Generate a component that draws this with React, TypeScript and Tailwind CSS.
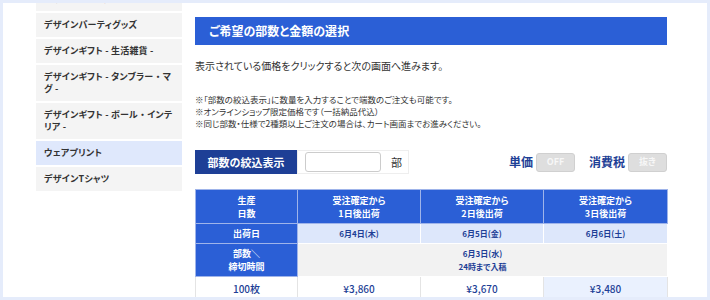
import React from 'react';

const jp = "font-['Noto_Sans_CJK_JP','Noto_Sans',sans-serif] [font-feature-settings:'palt']";

const menu = [
    { label: ['デザインフラッグ'] },
    { label: ['デザインパーティグッズ'] },
    { label: ['デザインギフト - 生活雑貨 -'] },
    { label: ['デザインギフト - タンブラー・マ', 'グ -'] },
    { label: ['デザインギフト - ボール・インテ', 'リア -'] },
    { label: ['ウェアプリント'], active: true },
    { label: ['デザインTシャツ'] },
];

// full-width middle dot keeps its spacing in the reference
function MenuLine({ text }: { text: string }) {
    const parts = text.split('・');
    return (
        <div className="whitespace-pre">
            {parts.map((p, i) => (
                <React.Fragment key={i}>
                    {i > 0 && <span className="[font-feature-settings:normal]">・</span>}
                    {p}
                </React.Fragment>
            ))}
        </div>
    );
}

function Sidebar() {
    return (
        <aside className="ml-[33px] w-[146px] shrink-0 -mt-[16px]">
            {menu.map((m) => (
                <div
                    key={m.label.join('')}
                    className={`border-b-2 border-white px-[8px] py-[6px] text-[9px] font-bold leading-[12px] tracking-[0.2px] text-[#333] ${
                        m.active ? 'bg-[#dfe8fc]' : 'bg-[#f4f4f4]'
                    }`}
                >
                    {m.label.map((l) => (
                        <MenuLine key={l} text={l} />
                    ))}
                </div>
            ))}
        </aside>
    );
}

function Toggle({ label, value }: { label: string; value: string }) {
    return (
        <div className="flex items-center gap-[3px]">
            <span className="text-[12px] font-bold text-[#1e3f96]">{label}</span>
            <span className="flex h-[19px] w-[39px] items-center justify-center rounded-[3px] border border-[#d0d0d0] bg-[#dedede] text-[9px] font-bold text-[#f7f7f7]">
                {value}
            </span>
        </div>
    );
}

const th = 'border border-[#9fb4ea] bg-[#2b5fd6] font-bold text-white';
const day = 'border border-white bg-[#dde7fb] text-[8px] font-bold text-[#1e3f96]';

function PriceTable() {
    return (
        <table className="mt-[15px] w-[472px] table-fixed border-collapse text-center text-[9px] leading-[13px]">
            <colgroup>
                <col className="w-[102px]" />
                <col className="w-[123px]" />
                <col className="w-[123px]" />
                <col className="w-[124px]" />
            </colgroup>
            <tbody>
                <tr className="h-[34px]">
                    <td className={th}>生産<br />日数</td>
                    <td className={th}>受注確定から<br />1日後出荷</td>
                    <td className={th}>受注確定から<br />2日後出荷</td>
                    <td className={th}>受注確定から<br />3日後出荷</td>
                </tr>
                <tr className="h-[20px]">
                    <td className={th}>出荷日</td>
                    <td className={day}>6月4日(木)</td>
                    <td className={day}>6月5日(金)</td>
                    <td className={day}>6月6日(土)</td>
                </tr>
                <tr className="h-[33px]">
                    <td className={th}>部数＼<br />締切時間</td>
                    <td colSpan={3} className="border border-white bg-[#f2f2f2] text-[8px] font-bold text-[#1e3f96]">
                        6月3日(水)<br />24時まで入稿
                    </td>
                </tr>
                <tr className="h-[24px] text-[10px] font-medium text-[#1e3f96]">
                    <td className="border border-[#e4e4e4] bg-white">100枚</td>
                    <td className="border border-[#e4e4e4] bg-white">¥3,860</td>
                    <td className="border border-[#e4e4e4] bg-white">¥3,670</td>
                    <td className="border border-[#e4e4e4] bg-[#eaf1fe]">¥3,480</td>
                </tr>
            </tbody>
        </table>
    );
}

export default function App() {
    return (
        <div className={`h-[300px] w-[710px] overflow-hidden bg-[#e5ecfb] p-[3px] ${jp}`}>
            <div className="flex h-full overflow-hidden bg-white">
                <Sidebar />

                <main className="ml-[13px] w-[472px] shrink-0 pt-[14px]">
                    {/* Section title */}
                    <h2 className="flex h-[28px] items-center bg-[#2b5fd6] pl-[14px] text-[12px] font-bold text-white">
                        ご希望の部数と金額の選択
                    </h2>

                    <p className="mt-[14px] text-[10px] leading-[14px] text-[#333]">
                        表示されている価格をクリックすると次の画面へ進みます。
                    </p>

                    <ul className="mt-[20px] text-[8.5px] leading-[12px] text-[#333]">
                        <li>※「部数の絞込表示」に数量を入力することで端数のご注文も可能です。</li>
                        <li>※オンラインショップ限定価格です（一括納品代込）</li>
                        <li>※同じ部数・仕様で2種類以上ご注文の場合は、カート画面までお進みください。</li>
                    </ul>

                    {/* Filter row */}
                    <div className="mt-[21px] flex items-center justify-between">
                        <div className="flex h-[24px]">
                            <div className="flex w-[102px] items-center justify-center bg-[#1e3f96] text-[11px] font-bold text-white">
                                部数の絞込表示
                            </div>
                            <div className="flex w-[112px] items-center border border-[#eeeeee] pl-[7px]">
                                <input className="h-[20px] w-[76px] rounded-[3px] border border-[#cccccc] bg-white" />
                                <span className="ml-[10px] text-[11px] text-[#333]">部</span>
                            </div>
                        </div>
                        <div className="flex items-center gap-[14px]">
                            <Toggle label="単価" value="OFF" />
                            <Toggle label="消費税" value="抜き" />
                        </div>
                    </div>

                    <PriceTable />
                </main>
            </div>
        </div>
    );
}
